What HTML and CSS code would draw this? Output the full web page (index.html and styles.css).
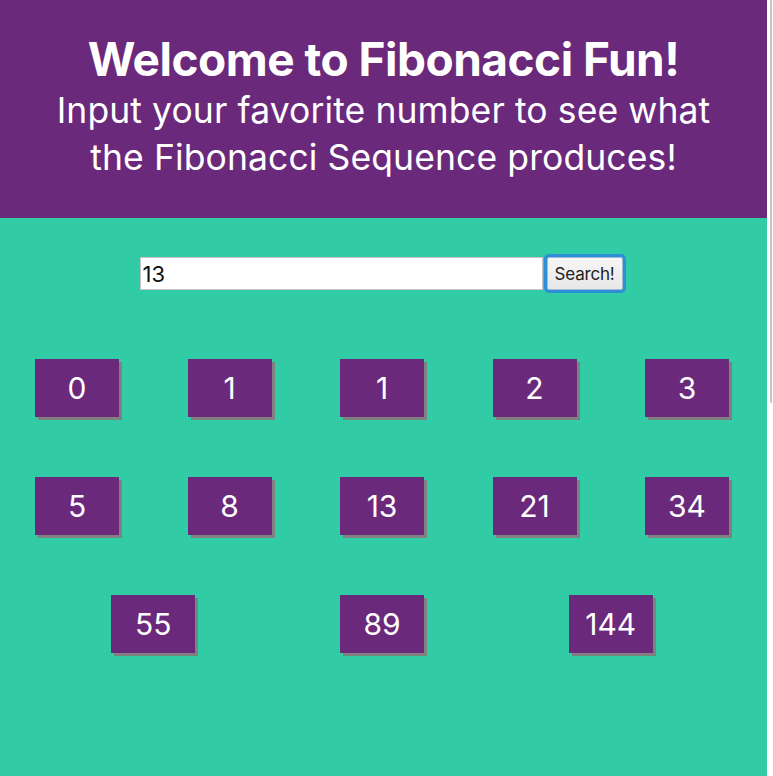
FILE: index.html
```html
<!DOCTYPE html>
<html lang="en">
<head>
<meta charset="utf-8">
<title>Fibonacci Fun</title>
<link rel="stylesheet" href="styles.css">
</head>
<body>
<div class="page">
  <header class="hero">
    <h1 class="title">Welcome to Fibonacci Fun!</h1>
    <p class="subtitle">Input your favorite number to see what the Fibonacci Sequence produces!</p>
  </header>
  <main class="content">
    <form class="search">
      <input class="search-input" type="text" value="13">
      <button class="search-button" type="button">Search!</button>
    </form>
    <div class="results">
      <div class="num">0</div>
      <div class="num">1</div>
      <div class="num">1</div>
      <div class="num">2</div>
      <div class="num">3</div>
      <div class="num">5</div>
      <div class="num">8</div>
      <div class="num">13</div>
      <div class="num">21</div>
      <div class="num">34</div>
      <div class="num">55</div>
      <div class="num">89</div>
      <div class="num">144</div>
    </div>
  </main>
</div>
<div class="scroll-thumb"></div>
</body>
</html>
```

FILE: styles.css
```css
html, body {
  margin: 0;
  padding: 0;
  background: #ffffff;
  height: 776px;
  overflow: hidden;
}

body {
  font-family: Inter, "Noto Sans", sans-serif;
  color: #ffffff;
}

.page {
  width: 767px;
  height: 776px;
  display: flex;
  flex-direction: column;
  background: #31cca5;
}

.hero {
  background: #6b297c;
  height: 218px;
  box-sizing: border-box;
  padding-top: 34px;
  text-align: center;
}

.title {
  margin: 0;
  font-size: 46px;
  line-height: 50px;
  font-weight: 700;
  letter-spacing: -0.5px;
}

.subtitle {
  margin: 3px auto 0;
  width: 700px;
  font-size: 35.5px;
  line-height: 47px;
  font-weight: 400;
  letter-spacing: 0.1px;
}

.content {
  flex: 1;
  display: flex;
  flex-direction: column;
}

.search {
  display: flex;
  justify-content: center;
  align-items: center;
  margin: 39px 0 0 0;
  padding-right: 5px;
  height: 33px;
}

.search-input {
  width: 403px;
  height: 33px;
  box-sizing: border-box;
  border: 1px solid #c4c4c4;
  background: #ffffff;
  padding: 0 2px;
  margin: 0;
  font-family: Inter, "Liberation Sans", sans-serif;
  font-size: 22px;
  color: #111111;
  outline: none;
}

.search-button {
  width: 76px;
  height: 33px;
  box-sizing: border-box;
  margin: 0 0 0 4px;
  padding: 0;
  border: 1px solid #9fb9d6;
  border-radius: 2px;
  background: linear-gradient(#f6f6f6, #e8e8e8);
  box-shadow: 0 0 0 3px #2d8fd8;
  font-family: Inter, "Liberation Sans", sans-serif;
  font-size: 17px;
  letter-spacing: -0.2px;
  color: #222222;
}

.results {
  display: flex;
  flex-wrap: wrap;
  justify-content: space-evenly;
  row-gap: 60px;
  margin-top: 69px;
  padding-right: 3px;
}

.num {
  width: 84px;
  height: 58px;
  margin: 0 33.5px;
  background: #6b297c;
  box-shadow: 3px 3px 0 #808080;
  display: flex;
  align-items: center;
  justify-content: center;
  font-size: 30px;
  font-weight: 400;
}

.scroll-thumb {
  position: fixed;
  top: 0;
  right: 1px;
  width: 2px;
  height: 403px;
  background: #c6c6c6;
  border-radius: 1px;
}
```
